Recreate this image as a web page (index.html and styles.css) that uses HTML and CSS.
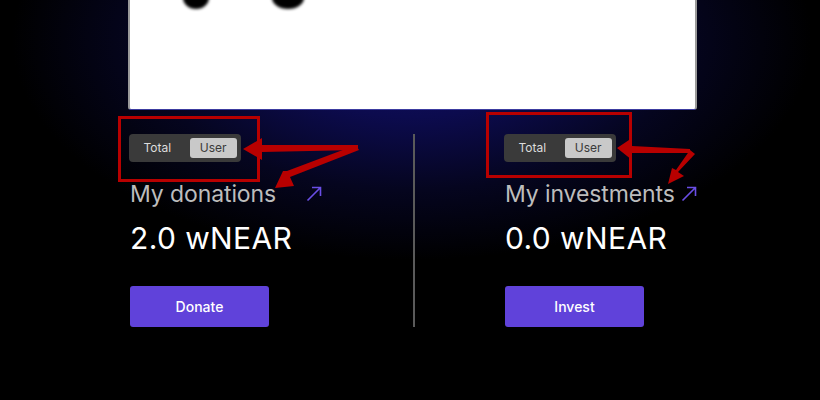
FILE: index.html
```html
<!DOCTYPE html>
<html lang="en">
<head>
<meta charset="utf-8">
<title>My donations</title>
<link rel="stylesheet" href="styles.css">
</head>
<body>
<div class="page">
  <div class="card">
    <svg class="card-art" width="569" height="109" viewBox="0 0 569 109">
      <defs>
        <filter id="blur" x="-50%" y="-50%" width="200%" height="200%">
          <feGaussianBlur stdDeviation="1.6"/>
        </filter>
      </defs>
      <ellipse cx="68" cy="-2" rx="13" ry="11" fill="#000" filter="url(#blur)"/>
      <ellipse cx="160" cy="-2" rx="16" ry="11" fill="#000" filter="url(#blur)"/>
    </svg>
  </div>

  <div class="stats">
    <section class="col">
      <div class="toggle">
        <span class="seg">Total</span>
        <span class="seg active">User</span>
      </div>
      <div class="title-row">
        <h2 class="title">My donations</h2>
        <svg class="link-icon" width="16" height="16" viewBox="0 0 16 16"><path d="M1.5 14.5 L14.5 1.5 M6 1.5 H14.5 V10" fill="none" stroke="#6a4ee6" stroke-width="1.6"/></svg>
      </div>
      <div class="value">2.0 wNEAR</div>
      <button class="btn">Donate</button>
    </section>

    <div class="divider"></div>

    <section class="col">
      <div class="toggle">
        <span class="seg">Total</span>
        <span class="seg active">User</span>
      </div>
      <div class="title-row">
        <h2 class="title">My investments</h2>
        <svg class="link-icon" width="16" height="16" viewBox="0 0 16 16"><path d="M1.5 14.5 L14.5 1.5 M6 1.5 H14.5 V10" fill="none" stroke="#6a4ee6" stroke-width="1.6"/></svg>
      </div>
      <div class="value">0.0 wNEAR</div>
      <button class="btn">Invest</button>
    </section>
  </div>

  <svg class="annot" width="820" height="400" viewBox="0 0 820 400">
    <g fill="none" stroke="#b80000" stroke-width="3">
      <rect x="119.5" y="117.5" width="139" height="63"/>
      <rect x="487.5" y="113.5" width="143" height="63"/>
    </g>
    <g fill="#b80000">
      <polygon points="358,145 262,145 262,138 243,149 262,160 262,152 358,150"/>
      <polygon points="356,145 359,150 290,177 294,186 275,188 283,171 287,171"/>
      <polygon points="690,149 632,146 632,138 617,148 632,160 632,153 690,153"/>
      <polygon points="690,150 695,154 678,172 684,176 668,184 672,168 676,170"/>
    </g>
  </svg>
</div>
</body>
</html>
```

FILE: styles.css
```css
* { box-sizing: border-box; }

html, body {
  margin: 0;
  padding: 0;
}

body {
  width: 820px;
  height: 400px;
  overflow: hidden;
  background: #000;
  font-family: Inter, "Liberation Sans", sans-serif;
}

.page {
  position: relative;
  width: 820px;
  height: 400px;
  background:
    radial-gradient(ellipse 400px 220px at 412px 40px, #13116e 0%, #0c0b4e 35%, #05051f 68%, #000 100%);
}

.card {
  margin-left: 128px;
  width: 569px;
  height: 110px;
  background: #fff;
  border-radius: 0 0 3px 3px;
  border-left: 2px solid #9a9a9a;
  border-right: 2px solid #9a9a9a;
  border-bottom: 1px solid #3c3ca0;
  overflow: hidden;
}

.card-art {
  display: block;
  margin-left: -2px;
}

.stats {
  display: flex;
  justify-content: space-between;
  margin: 24px 123px 0 130px;
}

.col {
  width: 192px;
  display: flex;
  flex-direction: column;
  align-items: flex-start;
}

.toggle {
  display: flex;
  align-items: center;
  width: 112px;
  height: 28px;
  padding: 4px;
  gap: 8px;
  background: #3a3a3a;
  border-radius: 4px;
  margin-left: -1px;
}

.seg {
  font-size: 12px;
  color: #dcdcdc;
  text-align: center;
  line-height: 20px;
}

.seg:first-child {
  width: 49px;
}

.seg.active {
  width: 48px;
  height: 20px;
  background: #c9c9c9;
  color: #3a3a3a;
  border-radius: 3px;
}

.title-row {
  width: 192px;
  display: flex;
  justify-content: space-between;
  align-items: center;
  margin-top: 18px;
  height: 28px;
}

.title {
  margin: 0;
  font-size: 23px;
  font-weight: 400;
  line-height: 28px;
  color: #bdbdbd;
  letter-spacing: -0.1px;
}

.link-icon {
  display: block;
}

.value {
  margin-top: 12px;
  font-size: 30px;
  line-height: 36px;
  color: #fff;
  letter-spacing: 0.4px;
}

.btn {
  margin-top: 30px;
  width: 139px;
  height: 41px;
  border: 0;
  border-radius: 3px;
  background: #6042da;
  color: #fff;
  font-family: Inter, "Liberation Sans", sans-serif;
  font-size: 14px;
  font-weight: 500;
  cursor: pointer;
}

.divider {
  width: 2px;
  background: #5a5a5a;
}

.annot {
  position: absolute;
  left: 0;
  top: 0;
  pointer-events: none;
}
```
